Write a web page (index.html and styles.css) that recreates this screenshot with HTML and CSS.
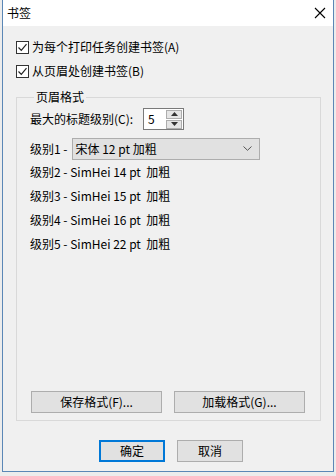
FILE: index.html
```html
<!DOCTYPE html>
<html>
<head>
<meta charset="utf-8">
<link rel="stylesheet" href="styles.css">
</head>
<body>
<div class="dialog">
  <div class="titlebar">
    <span class="title">书签</span>
    <svg class="close" width="12" height="12" viewBox="0 0 12 12"><path d="M1 1 L11 11 M11 1 L1 11" stroke="#000" stroke-width="1.1" fill="none"/></svg>
  </div>
  <div class="content">
    <label class="check-row"><span class="checkbox"><svg width="11" height="11" viewBox="0 0 11 11"><path d="M1.5 5.5 L4.3 8.3 L9.5 2.2" stroke="#222" stroke-width="1.2" fill="none"/></svg></span>为每个打印任务创建书签(A)</label>
    <label class="check-row"><span class="checkbox"><svg width="11" height="11" viewBox="0 0 11 11"><path d="M1.5 5.5 L4.3 8.3 L9.5 2.2" stroke="#222" stroke-width="1.2" fill="none"/></svg></span>从页眉处创建书签(B)</label>
    <fieldset class="group">
      <legend>页眉格式</legend>
      <div class="group-inner">
        <div class="row">
          <span class="lbl spin-lbl">最大的标题级别(C):</span>
          <div class="spin">
            <span class="spin-val">5</span>
            <div class="spin-btns">
              <span class="spin-btn"><svg width="7" height="4" viewBox="0 0 7 4"><path d="M0 4 L3.5 0 L7 4 Z" fill="#333"/></svg></span>
              <span class="spin-btn"><svg width="7" height="4" viewBox="0 0 7 4"><path d="M0 0 L3.5 4 L7 0 Z" fill="#333"/></svg></span>
            </div>
          </div>
        </div>
        <div class="row combo-row">
          <span class="lbl">级别1 -</span>
          <div class="combo">
            <span>宋体 12 pt 加粗</span>
            <svg width="9" height="5" viewBox="0 0 9 5"><path d="M0.5 0.5 L4.5 4.3 L8.5 0.5" stroke="#555" stroke-width="1" fill="none"/></svg>
          </div>
        </div>
        <div class="row level">级别2 - SimHei 14 pt&nbsp; 加粗</div>
        <div class="row level">级别3 - SimHei 15 pt&nbsp; 加粗</div>
        <div class="row level">级别4 - SimHei 16 pt&nbsp; 加粗</div>
        <div class="row level">级别5 - SimHei 22 pt&nbsp; 加粗</div>
        <div class="group-buttons">
          <button class="btn wide">保存格式(F)...</button>
          <button class="btn wide">加载格式(G)...</button>
        </div>
      </div>
    </fieldset>
    <div class="dialog-buttons">
      <button class="btn std default">确定</button>
      <button class="btn std">取消</button>
    </div>
  </div>
</div>
</body>
</html>
```

FILE: styles.css
```css
html, body {
  margin: 0;
  padding: 0;
}
body {
  width: 336px;
  height: 476px;
  background: #ececec;
  font-family: "Noto Sans CJK SC", "Noto Sans", sans-serif;
  font-size: 12px;
  color: #000;
  overflow: hidden;
}
.dialog {
  box-sizing: border-box;
  margin-left: 2px;
  width: 332px;
  height: 472px;
  background: #f0f0f0;
  border: 1px solid #5b87b6;
  border-top: none;
  display: flex;
  flex-direction: column;
}
.titlebar {
  height: 26px;
  background: #fff;
  display: flex;
  align-items: center;
  justify-content: space-between;
  padding: 0 7px 0 4px;
  flex-shrink: 0;
}
.title {
  line-height: 16px;
}
.close {
  display: block;
}
.content {
  padding: 9px 0 0 13px;
  display: flex;
  flex-direction: column;
}
.check-row {
  height: 24px;
  display: flex;
  align-items: center;
  line-height: 16px;
}
.checkbox {
  box-sizing: border-box;
  width: 13px;
  height: 13px;
  border: 1px solid #333;
  background: #fff;
  margin-right: 3px;
  display: flex;
  align-items: center;
  justify-content: center;
}
.checkbox svg {
  display: block;
}
.group {
  box-sizing: border-box;
  margin: 6px 0 0 0;
  width: 305px;
  border: 1px solid #d9d9d9;
  padding: 2px 14px 7px 13px;
  min-width: 0;
}
.group legend {
  padding: 0 2px;
  margin-left: 4px;
  line-height: 16px;
}
.group-inner {
  height: 306px;
  display: flex;
  flex-direction: column;
}
.row {
  height: 24px;
  display: flex;
  align-items: center;
  line-height: 16px;
  flex-shrink: 0;
}
.combo-row {
  margin-top: 6px;
  height: 23px;
}
.lbl {
  margin-right: 7px;
}
.spin-lbl {
  margin-right: 10px;
}
.spin {
  box-sizing: border-box;
  width: 41px;
  height: 22px;
  border: 1px solid #7a7a7a;
  background: #fff;
  display: flex;
  align-items: center;
  justify-content: space-between;
  padding: 0 1px 0 4px;
}
.spin-val {
  line-height: 16px;
}
.spin-btns {
  display: flex;
  flex-direction: column;
  gap: 1px;
}
.spin-btn {
  box-sizing: border-box;
  width: 16px;
  height: 9px;
  border: 1px solid #adadad;
  background: #e5e5e5;
  display: flex;
  align-items: center;
  justify-content: center;
}
.spin-btn svg {
  display: block;
}
.combo {
  box-sizing: border-box;
  width: 188px;
  height: 22px;
  border: 1px solid #adadad;
  background: #e1e1e1;
  display: flex;
  align-items: center;
  justify-content: space-between;
  padding: 0 7px 0 3px;
  margin-left: -3px;
}
.combo svg {
  display: block;
}
.group-buttons {
  margin-top: auto;
  display: flex;
  gap: 12px;
  padding-left: 1px;
}
.btn {
  box-sizing: border-box;
  height: 22px;
  border: 1px solid #adadad;
  background: #e1e1e1;
  font-family: "Noto Sans CJK SC", "Noto Sans", sans-serif;
  font-size: 12px;
  color: #000;
  padding: 0;
  margin: 0;
  line-height: 16px;
}
.btn.wide {
  width: 131px;
}
.dialog-buttons {
  margin-top: 19px;
  display: flex;
  gap: 12px;
  padding-left: 83px;
}
.btn.std {
  width: 66px;
}
.btn.default {
  border: 2px solid #0078d7;
}
```
